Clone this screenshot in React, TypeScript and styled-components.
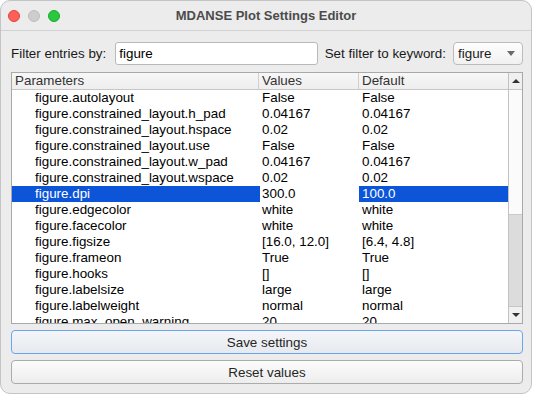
import styled, { createGlobalStyle } from "styled-components";

const GlobalStyle = createGlobalStyle`
    html, body {
        margin: 0;
        padding: 0;
        background: #ffffff;
    }
    body {
        font-family: "Liberation Sans", Arial, sans-serif;
        font-size: 13.4px;
    }
`;

interface IRow {
    name: string;
    value: string;
    def: string;
    selected?: boolean;
}

const rows: IRow[] = [
    { name: "figure.autolayout", value: "False", def: "False" },
    { name: "figure.constrained_layout.h_pad", value: "0.04167", def: "0.04167" },
    { name: "figure.constrained_layout.hspace", value: "0.02", def: "0.02" },
    { name: "figure.constrained_layout.use", value: "False", def: "False" },
    { name: "figure.constrained_layout.w_pad", value: "0.04167", def: "0.04167" },
    { name: "figure.constrained_layout.wspace", value: "0.02", def: "0.02" },
    { name: "figure.dpi", value: "300.0", def: "100.0", selected: true },
    { name: "figure.edgecolor", value: "white", def: "white" },
    { name: "figure.facecolor", value: "white", def: "white" },
    { name: "figure.figsize", value: "[16.0, 12.0]", def: "[6.4, 4.8]" },
    { name: "figure.frameon", value: "True", def: "True" },
    { name: "figure.hooks", value: "[]", def: "[]" },
    { name: "figure.labelsize", value: "large", def: "large" },
    { name: "figure.labelweight", value: "normal", def: "normal" },
    { name: "figure.max_open_warning", value: "20", def: "20" },
];

const COLS = "247px 100px 1fr";

const Window = styled.div`
    box-sizing: border-box;
    width: 532px;
    height: 394px;
    border: 1px solid #c4c4c4;
    border-radius: 10px;
    background: #ececec;
    overflow: hidden;
    display: flex;
    flex-direction: column;
`;

const TitleBar = styled.div`
    height: 29px;
    border-bottom: 1px solid #d2d2d2;
    display: grid;
    grid-template-columns: 80px 1fr 80px;
    align-items: center;
`;

const Lights = styled.div`
    display: flex;
    gap: 8px;
    padding-left: 7px;
    padding-top: 1px;
`;

const Light = styled.span<{ $color: string; $edge: string }>`
    width: 12px;
    height: 12px;
    border-radius: 50%;
    box-sizing: border-box;
    background: ${(p) => p.$color};
    border: 0.5px solid ${(p) => p.$edge};
`;

const Title = styled.div`
    text-align: center;
    font-weight: bold;
    font-size: 13px;
    color: #4b4b4b;
`;

const Body = styled.div`
    flex: 1;
    display: flex;
    flex-direction: column;
    padding: 11px 8px 0 10px;
`;

const FilterRow = styled.div`
    display: flex;
    align-items: center;
    height: 23px;
    color: #1a1a1a;
`;

const Label = styled.span`
    white-space: nowrap;
    margin-right: 9px;
`;

const TextInput = styled.div`
    flex: 1;
    box-sizing: border-box;
    height: 23px;
    background: #ffffff;
    border: 1px solid #b9b9b9;
    border-radius: 3px;
    padding: 0 3px;
    line-height: 21px;
    color: #000;
    margin-right: 7px;
`;

const Combo = styled.div`
    box-sizing: border-box;
    width: 70px;
    height: 23px;
    margin-left: -2px;
    background: linear-gradient(#fdfdfd, #f1f1f1);
    border: 1px solid #bcbcbc;
    border-radius: 4px;
    display: flex;
    align-items: center;
    justify-content: space-between;
    padding: 0 7px 0 4px;
    color: #1a1a1a;
`;

const Caret = styled.span`
    width: 0;
    height: 0;
    border-left: 4px solid transparent;
    border-right: 4px solid transparent;
    border-top: 5px solid #6a6a6a;
`;

const Table = styled.div`
    margin-top: 7px;
    box-sizing: border-box;
    height: 252px;
    border: 1px solid #a9a9a9;
    background: #ffffff;
    display: grid;
    grid-template-columns: 1fr 14px;
    overflow: hidden;
`;

const Main = styled.div`
    overflow: hidden;
`;

const Header = styled.div`
    display: grid;
    grid-template-columns: ${COLS};
    height: 16px;
    border-bottom: 1px solid #c6c6c6;
    background: linear-gradient(#f7f7f7, #eeeeee);
    color: #333;
`;

const HeadCell = styled.div`
    line-height: 16px;
    padding-left: 3px;
    border-right: 1px solid #cfcfcf;
    &:last-child {
        border-right: none;
    }
`;

const Row = styled.div`
    display: grid;
    grid-template-columns: ${COLS};
    height: 16px;
    line-height: 16px;
    color: #000;
`;

const Cell = styled.div<{ $sel?: boolean; $indent?: number }>`
    padding-left: ${(p) => p.$indent ?? 3}px;
    white-space: nowrap;
    overflow: hidden;
    background: ${(p) => (p.$sel ? "#0c55d8" : "transparent")};
    color: ${(p) => (p.$sel ? "#ffffff" : "#000000")};
`;

const ParamCell = styled(Cell)`
    margin-right: -1px;
`;

const ScrollBar = styled.div`
    border-left: 1px solid #c2c2c2;
    display: flex;
    flex-direction: column;
    background: #dcdcdc;
`;

const Arrow = styled.div<{ $down?: boolean }>`
    height: 16px;
    background: #f0f0f0;
    display: flex;
    align-items: center;
    justify-content: center;
    border-bottom: ${(p) => (p.$down ? "none" : "1px solid #c6c6c6")};
    border-top: ${(p) => (p.$down ? "1px solid #c6c6c6" : "none")};
    margin-top: ${(p) => (p.$down ? "auto" : "0")};
    &::after {
        content: "";
        border-left: 4px solid transparent;
        border-right: 4px solid transparent;
        ${(p) => (p.$down ? "border-top: 4px solid #333;" : "border-bottom: 4px solid #333;")}
    }
`;

const Thumb = styled.div`
    height: 124px;
    background: #fbfbfb;
    border-bottom: 1px solid #c9c9c9;
`;

const Button = styled.button<{ $default?: boolean }>`
    box-sizing: border-box;
    height: 24px;
    width: 100%;
    font-family: "Liberation Sans", Arial, sans-serif;
    font-size: 13.4px;
    color: #262626;
    border-radius: 4px;
    border: 1px solid ${(p) => (p.$default ? "#6aa5ee" : "#ababab")};
    background: ${(p) =>
        p.$default
            ? "linear-gradient(#f4f6f9, #e6e9ee)"
            : "linear-gradient(#fbfbfb, #ededed)"};
    padding: 0;
`;

const Buttons = styled.div`
    display: flex;
    flex-direction: column;
    gap: 6px;
    margin-top: 6px;
`;

export default function App() {
    return (
        <>
            <GlobalStyle />
            <Window>
                <TitleBar>
                    <Lights>
                        <Light $color="#fe5f57" $edge="#e0443e" />
                        <Light $color="#cdcdcd" $edge="#bdbdbd" />
                        <Light $color="#28c840" $edge="#1aab29" />
                    </Lights>
                    <Title>MDANSE Plot Settings Editor</Title>
                    <div />
                </TitleBar>
                <Body>
                    <FilterRow>
                        <Label>Filter entries by:</Label>
                        <TextInput>figure</TextInput>
                        <Label>Set filter to keyword:</Label>
                        <Combo>
                            figure
                            <Caret />
                        </Combo>
                    </FilterRow>
                    <Table>
                        <Main>
                            <Header>
                                <HeadCell>Parameters</HeadCell>
                                <HeadCell>Values</HeadCell>
                                <HeadCell>Default</HeadCell>
                            </Header>
                            {rows.map((r) => (
                                <Row key={r.name}>
                                    <ParamCell $sel={r.selected} $indent={23}>
                                        {r.name}
                                    </ParamCell>
                                    <Cell>{r.value}</Cell>
                                    <Cell $sel={r.selected}>{r.def}</Cell>
                                </Row>
                            ))}
                        </Main>
                        <ScrollBar>
                            <Arrow />
                            <Thumb />
                            <Arrow $down />
                        </ScrollBar>
                    </Table>
                    <Buttons>
                        <Button $default>Save settings</Button>
                        <Button>Reset values</Button>
                    </Buttons>
                </Body>
            </Window>
        </>
    );
}
